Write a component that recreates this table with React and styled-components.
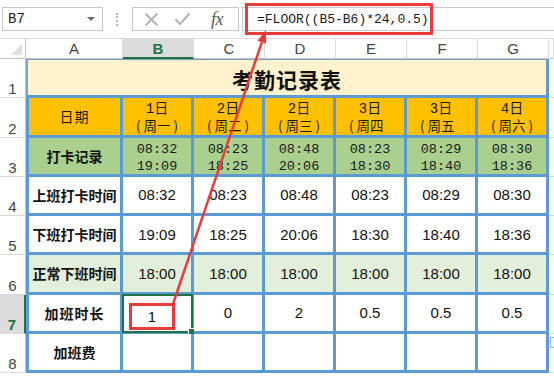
import React from "react";
import styled, { createGlobalStyle } from "styled-components";

const BLUE = "#5b9bd5";
const GREEN = "#217346";
const RED = "#ea3b3b";

const GlobalStyle = createGlobalStyle`
  html, body { margin: 0; padding: 0; background: #fff; }
  body {
    font-family: "Liberation Sans", "Noto Sans CJK SC", sans-serif;
  }
  #root { width: 554px; height: 377px; }
`;

const Page = styled.div`
  position: relative;
  width: 554px;
  height: 377px;
  overflow: hidden;
  background: #fff;
  display: flex;
  flex-direction: column;
`;

const FormulaBar = styled.div`
  height: 39px;
  flex: none;
  box-sizing: border-box;
  border-bottom: 1px solid #dadada;
  display: flex;
  align-items: center;
  padding-left: 2px;
`;

const NameBox = styled.div`
  width: 101px;
  height: 24px;
  box-sizing: border-box;
  border: 1px solid #c8c8c8;
  display: flex;
  align-items: center;
  justify-content: space-between;
  padding: 0 7px 0 5px;
  font-family: "Liberation Mono", monospace;
  font-size: 14px;
  color: #222;
`;

const Caret = styled.span`
  width: 0;
  height: 0;
  border-left: 4px solid transparent;
  border-right: 4px solid transparent;
  border-top: 4px solid #6a6a6a;
`;

const Grip = styled.div`
  width: 0;
  height: 13px;
  border-left: 2px dotted #b5b5b5;
  margin: 0 14px 0 13px;
`;

const ButtonGroup = styled.div`
  width: 107px;
  height: 24px;
  box-sizing: border-box;
  border: 1px solid #c8c8c8;
  display: flex;
  align-items: center;
  padding-left: 11px;
`;

const IconSlot = styled.span`
  display: flex;
  align-items: center;
  margin-right: ${(p) => p.$gap || 0}px;
`;

const Fx = styled.span`
  font-family: "Liberation Serif", serif;
  font-style: italic;
  font-size: 18px;
  color: #5a5a5a;
  letter-spacing: -0.5px;
`;

const FormulaInput = styled.div`
  position: relative;
  flex: 1;
  height: 24px;
  margin-left: 3px;
  box-sizing: border-box;
  border: 1px solid #c8c8c8;
  border-right: none;
  display: flex;
  align-items: center;
  padding-left: 14px;
  font-family: "Liberation Mono", monospace;
  font-size: 13px;
  color: #1a1a1a;
  white-space: pre;
`;

const RedFrame = styled.div`
  position: absolute;
  left: 2px;
  top: -5px;
  width: 188px;
  height: 32px;
  box-sizing: border-box;
  border: 3px solid ${RED};
`;

const Sheet = styled.div`
  flex: 1;
  display: grid;
  grid-template-columns: 26px 97px repeat(6, 71px) 1fr;
  grid-template-rows: 20px repeat(8, 39.25px) 1fr;
`;

const Corner = styled.div`
  position: relative;
  box-sizing: border-box;
  border-right: 1px solid #c4c4c4;
  border-bottom: 1px solid #c4c4c4;
  background: #fff;
  &::after {
    content: "";
    position: absolute;
    right: 3px;
    bottom: 3px;
    width: 0;
    height: 0;
    border-left: 11px solid transparent;
    border-bottom: 11px solid #dedede;
  }
`;

const ColHead = styled.div`
  box-sizing: border-box;
  display: flex;
  align-items: center;
  justify-content: center;
  font-size: 15px;
  color: ${(p) => (p.$active ? GREEN : "#444")};
  font-weight: ${(p) => (p.$active ? 700 : 400)};
  background: ${(p) => (p.$active ? "#dcdcdc" : "#fff")};
  border-right: 1px solid #dadada;
  border-bottom: ${(p) => (p.$active ? `2px solid ${GREEN}` : "1px solid #c4c4c4")};
`;

const RowHead = styled.div`
  box-sizing: border-box;
  display: flex;
  align-items: flex-end;
  justify-content: center;
  font-size: 15px;
  color: ${(p) => (p.$active ? GREEN : "#444")};
  font-weight: ${(p) => (p.$active ? 700 : 400)};
  background: ${(p) => (p.$active ? "#dcdcdc" : "#fff")};
  border-bottom: 1px solid #dadada;
  border-right: ${(p) => (p.$active ? `2px solid ${GREEN}` : "1px solid #c4c4c4")};
`;

const Cell = styled.div`
  position: relative;
  box-sizing: border-box;
  min-width: 0;
  background: ${(p) => p.$bg || "#fff"};
  border-right: 3px solid ${BLUE};
  border-bottom: 3px solid ${BLUE};
  border-left: ${(p) => (p.$first ? `3px solid ${BLUE}` : "none")};
  display: flex;
  flex-direction: column;
  align-items: center;
  justify-content: center;
  color: #111;
  white-space: nowrap;
`;

const TitleCell = styled(Cell)`
  grid-column: 2 / span 7;
  background: #fff2cc;
  border-top: 1px solid #7f9fc4;
  border-left: 2px solid #7aa3d3;
  font-family: "Noto Sans CJK SC", sans-serif;
  font-weight: 700;
  font-size: 21px;
  color: #111;
  letter-spacing: 1px;
  padding-top: 2px;
`;

const Filler = styled.div`
  border-bottom: 1px solid #dadada;
`;

const Label = styled.span`
  font-family: "Noto Sans CJK SC", sans-serif;
  font-weight: 700;
  font-size: 14px;
  line-height: 18px;
  letter-spacing: ${(p) => p.$spread || 0}px;
  color: #111;
`;

const PlainLabel = styled.span`
  font-family: "Noto Sans CJK SC", sans-serif;
  font-size: 14px;
  color: #1a1a1a;
  letter-spacing: 1px;
`;

const DayLine = styled.span`
  font-family: "Liberation Mono", "Noto Sans CJK SC", monospace;
  font-size: 14px;
  line-height: 16px;
  color: #1a1a1a;
  padding-top: 2px;
`;

const WeekLine = styled.span`
  display: flex;
  font-family: "Noto Sans CJK SC", sans-serif;
  font-size: 13.5px;
  line-height: 16px;
  color: #1a1a1a;
  align-self: ${(p) => (p.$clip ? "flex-start" : "center")};
  padding-left: ${(p) => (p.$clip ? 7 : 0)}px;
`;

const Paren = styled.span`
  display: inline-block;
  box-sizing: border-box;
  width: 13.5px;
  text-align: ${(p) => (p.$open ? "right" : "left")};
  padding: ${(p) => (p.$open ? "0 3px 0 0" : "0 0 0 3px")};
`;

const Clock = styled.span`
  font-family: "Liberation Mono", monospace;
  font-size: 13.5px;
  line-height: 17px;
  color: #1a1a1a;
  padding-top: ${(p) => (p.$pad ? 5 : 0)}px;
`;

const Value = styled.span`
  font-family: "Liberation Sans", sans-serif;
  font-size: 15px;
  color: #111;
`;

const Selection = styled.div`
  position: absolute;
  left: -1px;
  top: -1px;
  right: -2px;
  bottom: -2px;
  border: 2px solid ${GREEN};
  pointer-events: none;
  &::after {
    content: "";
    position: absolute;
    right: -4px;
    bottom: -4px;
    width: 5px;
    height: 5px;
    background: ${GREEN};
    border: 1px solid #fff;
  }
`;

const RedMark = styled.div`
  position: absolute;
  left: 6px;
  top: 8px;
  width: 46px;
  height: 27px;
  box-sizing: border-box;
  border: 3px solid ${RED};
  display: flex;
  align-items: center;
  justify-content: center;
`;

const Overlay = styled.svg`
  position: absolute;
  left: 0;
  top: 0;
  pointer-events: none;
`;

const PasteTag = styled.div`
  position: absolute;
  left: 550px;
  top: 337px;
  width: 8px;
  height: 11px;
  box-sizing: border-box;
  border: 1px solid #9fb3c8;
  background: #f4f7fa;
`;

const cols = ["A", "B", "C", "D", "E", "F", "G"];

const days = [
  ["1日", "一", true],
  ["2日", "二", true],
  ["2日", "三", true],
  ["3日", "四", false],
  ["3日", "五", false],
  ["4日", "六", true],
];

const punches = [
  ["08:32", "19:09"],
  ["08:23", "18:25"],
  ["08:48", "20:06"],
  ["08:23", "18:30"],
  ["08:29", "18:40"],
  ["08:30", "18:36"],
];

const onTimes = punches.map((p) => p[0]);
const offTimes = punches.map((p) => p[1]);
const normal = Array(6).fill("18:00");
const overtime = ["1", "0", "2", "0.5", "0.5", "0.5"];

function ValueRow({ num, label, values, bg, active }) {
  return (
    <>
      <RowHead $active={active}>{num}</RowHead>
      <Cell $first $bg={bg}>
        <Label>{label}</Label>
      </Cell>
      {values.map((v, i) => (
        <Cell key={i} $bg={bg}>
          {v !== null && <Value>{v}</Value>}
        </Cell>
      ))}
      <Filler />
    </>
  );
}

export default function App() {
  const tip = [266, 30];
  const u = [0.3225, -0.9466];
  const n = [0.9466, 0.3225];
  const base = [tip[0] - 13 * u[0], tip[1] - 13 * u[1]];
  const p1 = [base[0] + 4.5 * n[0], base[1] + 4.5 * n[1]];
  const p2 = [base[0] - 4.5 * n[0], base[1] - 4.5 * n[1]];

  return (
    <Page>
      <GlobalStyle />
      <FormulaBar>
        <NameBox>
          <span>B7</span>
          <Caret />
        </NameBox>
        <Grip />
        <ButtonGroup>
          <IconSlot $gap={15}>
            <svg width="15" height="15" viewBox="0 0 15 15">
              <path d="M1.5 1.5 L13.5 13.5 M13.5 1.5 L1.5 13.5" stroke="#b3b3b3" strokeWidth="2" fill="none" />
            </svg>
          </IconSlot>
          <IconSlot $gap={20}>
            <svg width="17" height="14" viewBox="0 0 17 14">
              <path d="M1.5 7.5 L6 12 L15.5 1.5" stroke="#b3b3b3" strokeWidth="2.2" fill="none" />
            </svg>
          </IconSlot>
          <Fx>fx</Fx>
        </ButtonGroup>
        <FormulaInput>
          <span>=FLOOR((B5-B6)*24,0.5)</span>
          <RedFrame />
        </FormulaInput>
      </FormulaBar>

      <Sheet>
        <Corner />
        {cols.map((c) => (
          <ColHead key={c} $active={c === "B"}>
            {c}
          </ColHead>
        ))}
        <ColHead />

        <RowHead>1</RowHead>
        <TitleCell>考勤记录表</TitleCell>
        <Filler />

        <RowHead>2</RowHead>
        <Cell $first $bg="#ffc000">
          <PlainLabel>日期</PlainLabel>
        </Cell>
        {days.map(([d, w, closed], i) => (
          <Cell key={i} $bg="#ffc000">
            <DayLine>{d}</DayLine>
            <WeekLine $clip={!closed}>
              <Paren $open>(</Paren>
              <span>周{w}</span>
              {closed && <Paren>)</Paren>}
            </WeekLine>
          </Cell>
        ))}
        <Filler />

        <RowHead>3</RowHead>
        <Cell $first $bg="#a9d08e">
          <Label>打卡记录</Label>
        </Cell>
        {punches.map(([a, b], i) => (
          <Cell key={i} $bg="#a9d08e">
            <Clock $pad>{a}</Clock>
            <Clock>{b}</Clock>
          </Cell>
        ))}
        <Filler />

        <ValueRow num="4" label="上班打卡时间" values={onTimes} />
        <ValueRow num="5" label="下班打卡时间" values={offTimes} />
        <ValueRow num="6" label="正常下班时间" values={normal} bg="#e2efda" />

        <RowHead $active>7</RowHead>
        <Cell $first>
          <Label $spread={1}>加班时长</Label>
        </Cell>
        {overtime.map((v, i) =>
          i === 0 ? (
            <Cell key={i}>
              <RedMark>
                <Value>{v}</Value>
              </RedMark>
              <Selection />
            </Cell>
          ) : (
            <Cell key={i}>
              <Value>{v}</Value>
            </Cell>
          )
        )}
        <Filler />

        <ValueRow num="8" label="加班费" values={Array(6).fill(null)} />
      </Sheet>

      <PasteTag />

      <Overlay width="554" height="377" viewBox="0 0 554 377">
        <line x1="173" y1="304" x2={base[0]} y2={base[1]} stroke={RED} strokeWidth="2.5" />
        <polygon points={`${tip[0]},${tip[1]} ${p1[0]},${p1[1]} ${p2[0]},${p2[1]}`} fill={RED} />
      </Overlay>
    </Page>
  );
}
